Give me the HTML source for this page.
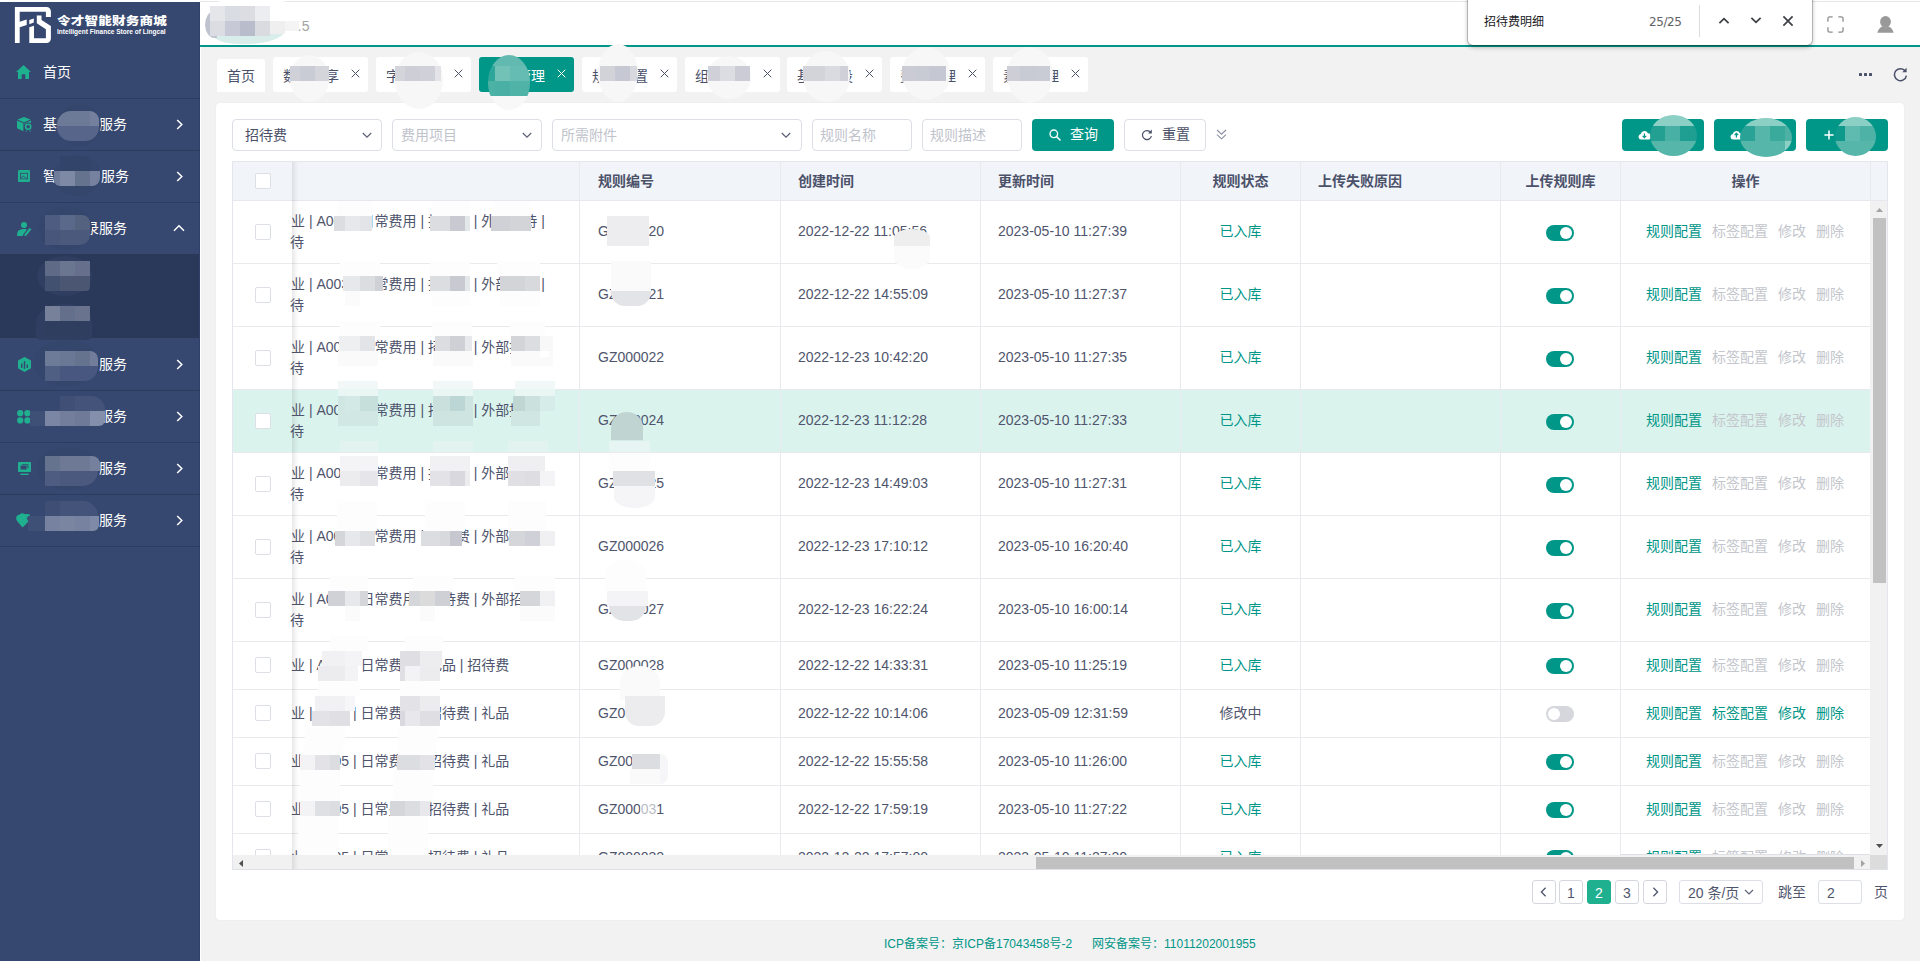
<!DOCTYPE html>
<html lang="zh-CN">
<head>
<meta charset="utf-8">
<title>令才智能财务商城</title>
<style>
*{box-sizing:border-box;margin:0;padding:0}
html,body{width:1920px;height:961px;overflow:hidden}
body{background:#f2f2f2;font-family:"Liberation Sans","Noto Sans CJK SC",sans-serif;font-size:14px;color:#4b5169;position:relative}
.abs{position:absolute}
/* ---------- sidebar ---------- */
#side{position:absolute;left:0;top:2px;width:200px;height:959px;background:#374870;border-right:1px solid #30406a}
#side .sep{position:absolute;left:0;width:200px;height:1px;background:#2d3b5e}
#side .t{position:absolute;color:#fff;font-size:14px;line-height:20px;white-space:nowrap}
#side svg{position:absolute}
#sub{position:absolute;left:0;top:252px;width:199px;height:84px;background:#2a3859}
.mz{position:absolute}
/* ---------- header ---------- */
#topline{position:absolute;left:200px;top:1px;width:1720px;height:1px;background:#e6e6e6}
#top0{position:absolute;left:0;top:0;width:1920px;height:2px;background:#fff}
#head{position:absolute;left:200px;top:2px;width:1720px;height:43px;background:#fff}
#gline{position:absolute;left:200px;top:45px;width:1720px;height:2px;background:#009688}
#vline{position:absolute;left:200px;top:47px;width:1px;height:914px;background:#fff}
/* ---------- tabs ---------- */
.tab{position:absolute;top:57px;height:35px;background:#fff;border-radius:3px;color:#4b5169;font-size:14px;line-height:35px;white-space:nowrap}
.tab.on{background:#009688;color:#fff}
.tab span{position:absolute;top:0}
.tab svg{position:absolute;top:12px}
/* ---------- card ---------- */
#card{position:absolute;left:216px;top:103px;width:1688px;height:817px;background:#fff;border-radius:4px;box-shadow:0 0 2px rgba(0,0,0,.06)}
.inp{position:absolute;top:119px;height:32px;border:1px solid #dcdfe6;border-radius:4px;background:#fff;font-size:14px;line-height:30px;color:#bfc3cc;padding-left:8px;white-space:nowrap}
.inp svg{position:absolute;top:10px}
.btn{position:absolute;top:119px;height:32px;border-radius:4px;background:#009688;color:#fff;font-size:14px;line-height:32px;white-space:nowrap}
/* ---------- table ---------- */
#tbl{position:absolute;left:232px;top:161px;width:1656px;height:709px;background:#fff;overflow:hidden}
#thead{position:absolute;left:0;top:0;width:1656px;height:40px;background:#f1f4f9;border-bottom:1px solid #e6e8ee}
.th{position:absolute;top:1px;height:38px;line-height:38px;font-weight:bold;color:#4b5169;font-size:14px;white-space:nowrap}
.vl{position:absolute;top:0;width:1px;height:694px;background:#e9eaee}
.row{position:absolute;left:0;width:1638px;border-bottom:1px solid #e9eaee}
.row.hl{background:#dbf3ed}
.c{position:absolute;white-space:nowrap;line-height:21px;font-size:14px;color:#4f556d}
.cb{position:absolute;left:22px;width:16px;height:16px;border:1px solid #dcdfe6;border-radius:2px;background:#fff}
.sw{position:absolute;left:1314px;width:28px;height:16px;border-radius:8px;background:#009688}
.sw i{position:absolute;right:2px;top:2px;width:12px;height:12px;border-radius:6px;background:#fff}
.sw.off{background:#d5d7dc}
.sw.off i{right:auto;left:2px}
.g{color:#009688}
.d{color:#c3c6cc}
.ops{position:absolute;left:1414px;white-space:nowrap;line-height:21px;font-size:14px}
.ops span{margin-right:10px}
/* ---------- pagination ---------- */
.pg{position:absolute;top:880px;height:24px;min-width:24px;border:1px solid #d4d7de;border-radius:3px;background:#fff;text-align:center;line-height:24px;font-size:14px;color:#4f556d}
.pg.on{background:#1fb08f;border-color:#1fb08f;color:#fff}
</style>
</head>
<body>
<div id="top0"></div>
<div id="topline"></div>
<div id="head"></div>
<div id="gline"></div>
<div id="vline"></div>
<div id="side">
  <!-- logo -->
  <svg style="left:0;top:0" width="200" height="46" viewBox="0 2 200 46">
    <g fill="#fff">
      <path d="M14.9 6.9H46.5A4.4 4.4 0 0 1 50.9 11.3V17H45.9V11.8H19.7V21.7L26.7 19.6V25L19.7 27.3V43H14.9Z"/>
      <path d="M29.3 20L33.8 18.4V22.6L29.3 24.2Z"/>
      <path d="M36.8 15.6H41.5V20L50.9 25.9V38.6A4.4 4.4 0 0 1 46.5 43H29.3V27.3L34 25.7V38.3H45.9V29.2L36.8 23.3Z"/>
    </g>
  </svg>
  <div class="t" style="left:57px;top:11px;font-size:13.6px;font-weight:900;line-height:16px;letter-spacing:0.15px;transform:scaleY(.86);transform-origin:0 14px">令才智能财务商城</div>
  <div class="t" style="left:57px;top:23px;font-size:12px;font-weight:bold;line-height:14px;transform:scale(.545);transform-origin:0 50%">Intelligent Finance Store of Lingcal</div>

  <!-- 首页 -->
  <svg style="left:16px;top:63px" width="15" height="14" viewBox="0 0 15 14"><path fill="#1fb08f" d="M7.5 0L15 7H13V13.4Q13 14 12.4 14H9.3V9.2H5.7V14H2.6Q2 14 2 13.4V7H0Z"/></svg>
  <div class="t" style="left:43px;top:60px">首页</div>
  <div class="sep" style="top:96px"></div>

  <!-- item 1 -->
  <svg style="left:17px;top:115px" width="15" height="15" viewBox="0 0 15 15"><g fill="#1fb08f"><path d="M7 0L13.6 2.6L7 5.4L0.4 2.6Z"/><path d="M0 3.6L6.4 6.3V14.2L0.6 11.6Q0 11.3 0 10.7Z"/><path d="M7.6 6.3L14 3.6V6.2A4.1 4.1 0 0 0 10.9 5.6A4 4 0 0 0 7.6 10Z"/><path d="M11.2 6.4A3.3 3.3 0 1 0 11.2 13A3.3 3.3 0 0 0 11.2 6.4ZM11.2 8A1.7 1.7 0 1 1 11.2 11.4A1.7 1.7 0 0 1 11.2 8Z"/><path d="M9.3 12.6L8.8 15L10 14.3ZM13.1 12.6L13.6 15L12.4 14.3Z"/></g></svg>
  <div class="t" style="left:43px;top:112px">基</div>
  <div class="t" style="left:99px;top:112px">服务</div>
  <svg style="left:175px;top:117px" width="9" height="11" viewBox="0 0 9 11"><path d="M2.2 1L6.8 5.5L2.2 10" fill="none" stroke="#fff" stroke-width="1.5"/></svg>
  <div class="sep" style="top:148px"></div>

  <!-- item 2 -->
  <svg style="left:18px;top:168px" width="12" height="12" viewBox="0 0 12 12"><rect x="0" y="0" width="12" height="12" rx="1" fill="#1fb08f"/><rect x="2.4" y="3.3" width="7.2" height="5.6" fill="none" stroke="#374870" stroke-width=".8"/><path d="M3.2 8L5 5.8L6.4 6.8L7.6 7.8H8.6" fill="none" stroke="#374870" stroke-width=".8"/><path d="M1 1.4L2 2M11 1.4L10 2M1 10.6L2 10M11 10.6L10 10" stroke="#2a947d" stroke-width=".6"/></svg>
  <div class="t" style="left:43px;top:164px">智</div>
  <div class="t" style="left:101px;top:164px">服务</div>
  <svg style="left:175px;top:169px" width="9" height="11" viewBox="0 0 9 11"><path d="M2.2 1L6.8 5.5L2.2 10" fill="none" stroke="#fff" stroke-width="1.5"/></svg>
  <div class="sep" style="top:200px"></div>

  <!-- item 3 -->
  <svg style="left:17px;top:220px" width="15" height="14" viewBox="0 0 15 14"><g fill="#1fb08f"><circle cx="7" cy="3" r="3"/><path d="M0 13.4Q0 7 6.4 7H8.6L10 7.6L6.2 12.6L5.8 14H.6Q0 14 0 13.4Z"/><path d="M12.6 6L14.4 7.2L9.4 13.6L7.4 14.2L7.8 12.2Z"/></g></svg>
  <div class="t" style="left:85px;top:216px">录服务</div>
  <svg style="left:173px;top:222px" width="12" height="8" viewBox="0 0 12 8"><path d="M1 6.8L6 1.8L11 6.8" fill="none" stroke="#fff" stroke-width="1.5"/></svg>

  <div id="sub"></div>

  <!-- item 4 -->
  <svg style="left:18px;top:355px" width="13" height="15" viewBox="0 0 13 15"><path fill="#1fb08f" d="M6.5 0L13 3.6V11.2L6.5 15L0 11.2V3.6ZM3 6.4V11H4.4V6.4ZM5.8 4V11.8H7.2V4ZM8.6 7.6V11H10V7.6Z"/></svg>
  <div class="t" style="left:99px;top:352px">服务</div>
  <svg style="left:175px;top:357px" width="9" height="11" viewBox="0 0 9 11"><path d="M2.2 1L6.8 5.5L2.2 10" fill="none" stroke="#fff" stroke-width="1.5"/></svg>
  <div class="sep" style="top:388px"></div>

  <!-- item 5 -->
  <svg style="left:17px;top:408px" width="14" height="14" viewBox="0 0 14 14"><g fill="#1fb08f"><circle cx="3.2" cy="3.2" r="3.1"/><circle cx="10.4" cy="3.2" r="3.1"/><circle cx="3.2" cy="10.4" r="3.1"/><circle cx="10.4" cy="10.4" r="3.1"/></g></svg>
  <div class="t" style="left:99px;top:404px">服务</div>
  <svg style="left:175px;top:409px" width="9" height="11" viewBox="0 0 9 11"><path d="M2.2 1L6.8 5.5L2.2 10" fill="none" stroke="#fff" stroke-width="1.5"/></svg>
  <div class="sep" style="top:440px"></div>

  <!-- item 6 -->
  <svg style="left:18px;top:460px" width="13" height="14" viewBox="0 0 13 14"><g fill="#1fb08f"><path d="M0 .8Q0 0 .8 0H12.2Q13 0 13 .8V9.2Q13 10 12.2 10H.8Q0 10 0 9.2ZM2.6 3.6V7.6H8.6V3.6ZM4 2.2V2.9H9.4V6.2H10.4V2.2Z"/><path d="M2.4 11.6H10.6V13H2.4Z"/></g></svg>
  <div class="t" style="left:99px;top:456px">服务</div>
  <svg style="left:175px;top:461px" width="9" height="11" viewBox="0 0 9 11"><path d="M2.2 1L6.8 5.5L2.2 10" fill="none" stroke="#fff" stroke-width="1.5"/></svg>
  <div class="sep" style="top:492px"></div>

  <!-- item 7 -->
  <svg style="left:16px;top:511px" width="15" height="15" viewBox="0 0 15 15"><path fill="#1fb08f" d="M4 1.2Q6 -0.6 8.4 1L13.6 1.2L14 2.4L10.6 5L12.4 8.6L7.4 13.8Q6.4 14.6 5.6 13.6L.8 7.4Q-.8 4 1.6 2.2Z"/></svg>
  <div class="t" style="left:99px;top:508px">服务</div>
  <svg style="left:175px;top:513px" width="9" height="11" viewBox="0 0 9 11"><path d="M2.2 1L6.8 5.5L2.2 10" fill="none" stroke="#fff" stroke-width="1.5"/></svg>
  <div class="sep" style="top:544px"></div>
</div>

<!-- header content -->
<div class="abs" style="left:290px;top:16px;font-size:14px;line-height:20px;color:#a3a3a3">7.5</div>
<div class="mz" style="left:205px;top:0px;width:92px;height:44px;border-radius:22px 30px 36px 22px/20px 8px 30px 20px;background:#fff"></div>
<div class="mz" style="left:209px;top:30px;width:76px;height:14px;border-radius:0 0 40px 30px/0 0 14px 14px;background:#d9eeeb"></div>
<div class="mz" style="left:205px;top:11px;width:12px;height:27px;border-radius:10px 0 0 10px/14px 0 0 14px;background:#bfc2cf"></div>
<div class="mz" style="left:210px;top:6px;width:15px;height:15px;background:#e5e6ea"></div>
<div class="mz" style="left:225px;top:6px;width:15px;height:15px;background:#dadce4"></div>
<div class="mz" style="left:240px;top:6px;width:15px;height:15px;background:#dcdde3"></div>
<div class="mz" style="left:255px;top:6px;width:15px;height:15px;background:#ecedf0"></div>
<div class="mz" style="left:210px;top:21px;width:15px;height:15px;background:#dcdde3"></div>
<div class="mz" style="left:225px;top:21px;width:15px;height:15px;background:#c7c9d6"></div>
<div class="mz" style="left:240px;top:21px;width:15px;height:15px;background:#b9bccb"></div>
<div class="mz" style="left:255px;top:21px;width:15px;height:15px;background:#dadbe1"></div>
<div class="mz" style="left:270px;top:21px;width:15px;height:13px;background:#efefef"></div>
<div class="mz" style="left:285px;top:21px;width:14px;height:10px;background:#f4f4f5"></div>

<!-- fullscreen icon -->
<svg class="abs" style="left:1826.5px;top:16px" width="17" height="17" viewBox="0 0 18 18"><path d="M1 6V3Q1 1 3 1H6M12 1H15Q17 1 17 3V6M17 12V15Q17 17 15 17H12M6 17H3Q1 17 1 15V12" fill="none" stroke="#8c8c8c" stroke-width="1.35"/></svg>
<!-- user icon -->
<svg class="abs" style="left:1877px;top:16px" width="17" height="17" viewBox="0 0 17 17"><g fill="#999"><ellipse cx="8.5" cy="5.8" rx="5.4" ry="5.7"/><path d="M.3 16.8C1 13.2 3.4 11.2 6.2 10L8.5 11.6L10.8 10C13.6 11.2 16 13.2 16.7 16.8Z"/></g></svg>

<div class="tab" style="left:217px;top:59px;width:48px;height:33px;border-radius:3px 3px 0 0"><span style="left:10px;line-height:20px;top:7px">首页</span></div>
<div class="tab" style="left:273px;width:95px"><span style="left:10px;line-height:20px;top:9px">数</span><span style="left:52px;line-height:20px;top:9px">享</span><svg style="left:78px" width="9" height="9" viewBox="0 0 9 9"><path d="M.7 .7L8.3 8.3M8.3 .7L.7 8.3" fill="none" stroke="#4b5169" stroke-width="1"/></svg></div>
<div class="tab" style="left:376px;width:95px"><span style="left:10px;line-height:20px;top:9px">字</span><span style="left:52px;line-height:20px;top:9px">理</span><svg style="left:78px" width="9" height="9" viewBox="0 0 9 9"><path d="M.7 .7L8.3 8.3M8.3 .7L.7 8.3" fill="none" stroke="#4b5169" stroke-width="1"/></svg></div>
<div class="tab on" style="left:479px;width:95px"><span style="left:38px;line-height:20px;top:9px">管理</span><svg style="left:78px" width="9" height="9" viewBox="0 0 9 9"><path d="M.7 .7L8.3 8.3M8.3 .7L.7 8.3" fill="none" stroke="#fff" stroke-width="1"/></svg></div>
<div class="tab" style="left:582px;width:95px"><span style="left:10px;line-height:20px;top:9px">规</span><span style="left:52px;line-height:20px;top:9px">置</span><svg style="left:78px" width="9" height="9" viewBox="0 0 9 9"><path d="M.7 .7L8.3 8.3M8.3 .7L.7 8.3" fill="none" stroke="#4b5169" stroke-width="1"/></svg></div>
<div class="tab" style="left:685px;width:95px"><span style="left:10px;line-height:20px;top:9px">组</span><svg style="left:78px" width="9" height="9" viewBox="0 0 9 9"><path d="M.7 .7L8.3 8.3M8.3 .7L.7 8.3" fill="none" stroke="#4b5169" stroke-width="1"/></svg></div>
<div class="tab" style="left:787px;width:95px"><span style="left:10px;line-height:20px;top:9px">基</span><span style="left:52px;line-height:20px;top:9px">设</span><svg style="left:78px" width="9" height="9" viewBox="0 0 9 9"><path d="M.7 .7L8.3 8.3M8.3 .7L.7 8.3" fill="none" stroke="#4b5169" stroke-width="1"/></svg></div>
<div class="tab" style="left:890px;width:95px"><span style="left:10px;line-height:20px;top:9px">费</span><span style="left:52px;line-height:20px;top:9px">理</span><svg style="left:78px" width="9" height="9" viewBox="0 0 9 9"><path d="M.7 .7L8.3 8.3M8.3 .7L.7 8.3" fill="none" stroke="#4b5169" stroke-width="1"/></svg></div>
<div class="tab" style="left:993px;width:95px"><span style="left:10px;line-height:20px;top:9px">素</span><span style="left:52px;line-height:20px;top:9px">理</span><svg style="left:78px" width="9" height="9" viewBox="0 0 9 9"><path d="M.7 .7L8.3 8.3M8.3 .7L.7 8.3" fill="none" stroke="#4b5169" stroke-width="1"/></svg></div>
<div class="abs" style="left:1859px;top:73px;width:2.6px;height:2.6px;background:#4b5169;box-shadow:5px 0 0 #4b5169,10px 0 0 #4b5169;border-radius:.6px"></div>
<svg class="abs" style="left:1893px;top:67px" width="15" height="15" viewBox="0 0 15 15"><path d="M12.4 4.2A6 6 0 1 0 13.4 8.6" fill="none" stroke="#4b5169" stroke-width="1.5"/><path d="M13.6 .8V5.2H9.2Z" fill="#4b5169"/></svg>
<!--TABSMZ-->
<!--SIDEMZ_START-->
<!-- sidebar mosaics -->
<div class="mz" style="left:57px;top:104px;width:44px;height:42px;background:#35466d;border-radius:50%"></div>
<div class="mz" style="left:57px;top:111px;width:33px;height:15px;background:#6c7a97;border-radius:14px 0 0 0"></div>
<div class="mz" style="left:90px;top:111px;width:9px;height:15px;background:#74809d;border-radius:0 9px 0 0"></div>
<div class="mz" style="left:57px;top:126px;width:42px;height:15px;background:#57658a;border-radius:0 0 14px 14px"></div>
<div class="mz" style="left:53px;top:155px;width:48px;height:41px;background:#35466d;border-radius:50%"></div>
<div class="mz" style="left:60px;top:156px;width:30px;height:15px;background:#33446a"></div>
<div class="mz" style="left:54px;top:171px;width:6px;height:15px;background:#6f7c9a;border-radius:0 0 0 6px"></div>
<div class="mz" style="left:60px;top:171px;width:15px;height:15px;background:#7d89a5"></div>
<div class="mz" style="left:75px;top:171px;width:15px;height:15px;background:#66738f"></div>
<div class="mz" style="left:90px;top:171px;width:10px;height:15px;background:#75819e;border-radius:0 0 8px 0"></div>
<div class="mz" style="left:38px;top:206px;width:54px;height:44px;background:#35466d;border-radius:50%"></div>
<div class="mz" style="left:45px;top:215px;width:15px;height:15px;background:#4d5c80"></div>
<div class="mz" style="left:60px;top:215px;width:15px;height:15px;background:#5a6889"></div>
<div class="mz" style="left:75px;top:215px;width:15px;height:15px;background:#54627f;border-radius:0 8px 0 0"></div>
<div class="mz" style="left:45px;top:230px;width:15px;height:15px;background:#47567a"></div>
<div class="mz" style="left:60px;top:230px;width:30px;height:15px;background:#4b5a7c;border-radius:0 0 10px 0"></div>
<div class="mz" style="left:37px;top:256px;width:55px;height:40px;background:#2f3e61;border-radius:50%"></div>
<div class="mz" style="left:45px;top:261px;width:15px;height:15px;background:#5f6b86"></div>
<div class="mz" style="left:60px;top:261px;width:15px;height:15px;background:#6a7690"></div>
<div class="mz" style="left:75px;top:261px;width:15px;height:15px;background:#666f8c"></div>
<div class="mz" style="left:45px;top:276px;width:15px;height:15px;background:#435171"></div>
<div class="mz" style="left:60px;top:276px;width:30px;height:15px;background:#4a5672;border-radius:0 0 4px 0"></div>
<div class="mz" style="left:36px;top:304px;width:56px;height:36px;background:#2f3e61;border-radius:50% 50% 10% 10%"></div>
<div class="mz" style="left:45px;top:306px;width:15px;height:15px;background:#778199"></div>
<div class="mz" style="left:60px;top:306px;width:15px;height:15px;background:#646f8b"></div>
<div class="mz" style="left:75px;top:306px;width:15px;height:15px;background:#6a738d"></div>
<div class="mz" style="left:45px;top:321px;width:45px;height:15px;background:#2f3d5e"></div>
<div class="mz" style="left:33px;top:340px;width:67px;height:46px;background:#35466d;border-radius:50%"></div>
<div class="mz" style="left:45px;top:351px;width:15px;height:15px;background:#6d7a98"></div>
<div class="mz" style="left:60px;top:351px;width:15px;height:15px;background:#6a7795"></div>
<div class="mz" style="left:75px;top:351px;width:15px;height:15px;background:#66738f"></div>
<div class="mz" style="left:90px;top:351px;width:8px;height:15px;background:#717d9b;border-radius:0 8px 0 0"></div>
<div class="mz" style="left:45px;top:366px;width:15px;height:15px;background:#4f5e83"></div>
<div class="mz" style="left:60px;top:366px;width:38px;height:15px;background:#485780;border-radius:0 0 14px 0"></div>
<div class="mz" style="left:60px;top:396px;width:15px;height:15px;background:#3f4f75"></div>
<div class="mz" style="left:75px;top:396px;width:30px;height:15px;background:#44537a;border-radius:0 14px 0 0"></div>
<div class="mz" style="left:30px;top:411px;width:15px;height:15px;background:#3f5076"></div>
<div class="mz" style="left:45px;top:411px;width:15px;height:15px;background:#7a86a3"></div>
<div class="mz" style="left:60px;top:411px;width:15px;height:15px;background:#727e9b"></div>
<div class="mz" style="left:75px;top:411px;width:15px;height:15px;background:#6e7a97"></div>
<div class="mz" style="left:90px;top:411px;width:15px;height:15px;background:#8490ab;border-radius:0 0 6px 0"></div>
<div class="mz" style="left:37px;top:447px;width:63px;height:43px;background:#35466d;border-radius:50%"></div>
<div class="mz" style="left:45px;top:456px;width:15px;height:15px;background:#66738f"></div>
<div class="mz" style="left:60px;top:456px;width:30px;height:15px;background:#6d7995"></div>
<div class="mz" style="left:90px;top:456px;width:10px;height:15px;background:#74809c;border-radius:0 8px 0 0"></div>
<div class="mz" style="left:45px;top:471px;width:15px;height:15px;background:#4d5c80"></div>
<div class="mz" style="left:60px;top:471px;width:38px;height:15px;background:#4a597d;border-radius:0 0 16px 0"></div>
<div class="mz" style="left:45px;top:501px;width:15px;height:15px;background:#3e4e74"></div>
<div class="mz" style="left:60px;top:501px;width:38px;height:15px;background:#44537a;border-radius:0 16px 0 0"></div>
<div class="mz" style="left:28px;top:516px;width:17px;height:15px;background:#3f5077"></div>
<div class="mz" style="left:45px;top:516px;width:15px;height:15px;background:#76829f"></div>
<div class="mz" style="left:60px;top:516px;width:15px;height:15px;background:#7985a1"></div>
<div class="mz" style="left:75px;top:516px;width:15px;height:15px;background:#7682a0"></div>
<div class="mz" style="left:90px;top:516px;width:9px;height:15px;background:#7f8aa6;border-radius:0 0 6px 0"></div>
<!--SIDEMZ_END-->


<div id="card"></div>
<div class="inp" style="left:232px;width:150px;color:#4b5169;padding-left:12px">招待费<svg style="left:129px;top:12px" width="10" height="7" viewBox="0 0 10 7"><path d="M.8 1L5 5.2L9.2 1" fill="none" stroke="#5d6279" stroke-width="1.25"/></svg></div>
<div class="inp" style="left:392px;width:150px">费用项目<svg style="left:129px;top:12px" width="10" height="7" viewBox="0 0 10 7"><path d="M.8 1L5 5.2L9.2 1" fill="none" stroke="#5d6279" stroke-width="1.25"/></svg></div>
<div class="inp" style="left:552px;width:250px">所需附件<svg style="left:228px;top:12px" width="10" height="7" viewBox="0 0 10 7"><path d="M.8 1L5 5.2L9.2 1" fill="none" stroke="#5d6279" stroke-width="1.25"/></svg></div>
<div class="inp" style="left:812px;width:100px;padding-left:7px">规则名称</div>
<div class="inp" style="left:922px;width:100px;padding-left:7px">规则描述</div>
<div class="btn" style="left:1032px;width:82px"><svg class="abs" style="left:17px;top:10px" width="12" height="12" viewBox="0 0 12 12"><circle cx="4.8" cy="4.8" r="3.8" fill="none" stroke="#fff" stroke-width="1.35"/><path d="M7.6 7.6L11 11" stroke="#fff" stroke-width="1.5" stroke-linecap="round"/></svg><span class="abs" style="left:38px;top:-1px">查询</span></div>
<div class="btn" style="left:1124px;width:82px;background:#fff;border:1px solid #dcdfe6;color:#4b5169;line-height:30px"><svg class="abs" style="left:16px;top:9px" width="12" height="12" viewBox="0 0 12 12"><path d="M9.6 3.4A4.5 4.5 0 1 0 10.4 7" fill="none" stroke="#4b5169" stroke-width="1.2"/><path d="M10.8 .6V4.4H7Z" fill="#4b5169"/></svg><span class="abs" style="left:37px;top:-1px">重置</span></div>
<svg class="abs" style="left:1216px;top:129px" width="11" height="11" viewBox="0 0 11 11"><path d="M1 1L5.5 5.2L10 1M1 5.6L5.5 9.8L10 5.6" fill="none" stroke="#8a8ea0" stroke-width="1.1"/></svg>
<div class="btn" style="left:1622px;width:82px"><svg class="abs" style="left:16px;top:11px" width="13" height="10" viewBox="0 0 13 10"><path fill="#fff" d="M3.2 9.6A2.9 2.9 0 0 1 2.7 3.9A3.8 3.8 0 0 1 9.9 3.2A3.2 3.2 0 0 1 9.4 9.6Z"/><path d="M6.4 3.4V7.4M4.6 5.8L6.4 7.6L8.2 5.8" fill="none" stroke="#009688" stroke-width="1.2"/></svg></div>
<div class="btn" style="left:1714px;width:82px"><svg class="abs" style="left:16px;top:11px" width="13" height="10" viewBox="0 0 13 10"><path fill="#fff" d="M3.2 9.6A2.9 2.9 0 0 1 2.7 3.9A3.8 3.8 0 0 1 9.9 3.2A3.2 3.2 0 0 1 9.4 9.6Z"/><path d="M6.4 7.6V3.6M4.6 5.2L6.4 3.4L8.2 5.2" fill="none" stroke="#009688" stroke-width="1.2"/></svg></div>
<div class="btn" style="left:1806px;width:82px"><svg class="abs" style="left:18px;top:11px" width="10" height="10" viewBox="0 0 10 10"><path d="M5 .4V9.6M.4 5H9.6" stroke="#fff" stroke-width="1.5"/></svg></div>
<div class="mz" style="left:1650px;top:115px;width:47px;height:41px;border-radius:50%;overflow:hidden"><div class="mz" style="left:0px;top:0px;width:47px;height:11px;background:#8ccfc5"></div><div class="mz" style="left:0px;top:11px;width:15px;height:15px;background:#23a092"></div><div class="mz" style="left:15px;top:11px;width:15px;height:15px;background:#48b0a4"></div><div class="mz" style="left:30px;top:11px;width:17px;height:15px;background:#1f9f91"></div><div class="mz" style="left:0px;top:26px;width:47px;height:15px;background:#57b6aa"></div></div>
<div class="mz" style="left:1740px;top:118px;width:52px;height:39px;border-radius:50%;overflow:hidden"><div class="mz" style="left:0px;top:0px;width:52px;height:8px;background:#8ccfc5"></div><div class="mz" style="left:0px;top:8px;width:15px;height:15px;background:#2aa396"></div><div class="mz" style="left:15px;top:8px;width:15px;height:15px;background:#57b6aa"></div><div class="mz" style="left:30px;top:8px;width:15px;height:15px;background:#3aaa9d"></div><div class="mz" style="left:45px;top:8px;width:7px;height:15px;background:#4db1a5"></div><div class="mz" style="left:0px;top:23px;width:45px;height:16px;background:#57b6aa"></div><div class="mz" style="left:45px;top:23px;width:7px;height:16px;background:#8ccfc5"></div></div>
<div class="mz" style="left:1834.5px;top:117px;width:41.5px;height:39px;border-radius:50%;overflow:hidden"><div class="mz" style="left:-0.5px;top:0px;width:42px;height:9px;background:#8ccfc5"></div><div class="mz" style="left:-0.5px;top:9px;width:11px;height:15px;background:#0d998b"></div><div class="mz" style="left:10.5px;top:9px;width:15px;height:15px;background:#5fbab0"></div><div class="mz" style="left:25.5px;top:9px;width:16px;height:15px;background:#4fb2a7"></div><div class="mz" style="left:-0.5px;top:24px;width:42px;height:15px;background:#57b6aa"></div></div>
<!--TABLE_START--><div id="tbl">
<div id="thead"></div>
<div class="th" style="left:366px">规则编号</div>
<div class="th" style="left:566px">创建时间</div>
<div class="th" style="left:766px">更新时间</div>
<div class="th" style="left:949px;width:119px;text-align:center">规则状态</div>
<div class="th" style="left:1086px">上传失败原因</div>
<div class="th" style="left:1269px;width:119px;text-align:center">上传规则库</div>
<div class="th" style="left:1389px;width:249px;text-align:center">操作</div>
<div class="cb" style="left:23px;top:12px"></div>
<div id="tbody" style="position:absolute;left:0;top:40px;width:1638px;height:654px;overflow:hidden">
<div class="row" style="top:0px;height:63px">
<div class="cb" style="left:23px;top:23px"></div><div class="c" style="left:59px;top:10px">业 | A003 | 日常费用 | 招待费 | 外部招待 |<br><span style="position:relative;left:-1px">待</span></div><div class="c" style="left:366px;top:20px">GZ000020</div><div class="c" style="left:566px;top:20px">2022-12-22 11:05:56</div><div class="c" style="left:766px;top:20px">2023-05-10 11:27:39</div><div class="c g" style="left:949px;width:119px;text-align:center;top:20px">已入库</div><div class="sw" style="top:24px"><i></i></div><div class="ops" style="top:20px"><span class="g">规则配置</span><span class="d">标签配置</span><span class="d">修改</span><span class="d">删除</span></div>
</div>
<div class="row" style="top:63px;height:63px">
<div class="cb" style="left:23px;top:23px"></div><div class="c" style="left:59px;top:10px">业 | A003 | 日常费用 | 招待费 | 外部招待 |<br><span style="position:relative;left:-1px">待</span></div><div class="c" style="left:366px;top:20px">GZ000021</div><div class="c" style="left:566px;top:20px">2022-12-22 14:55:09</div><div class="c" style="left:766px;top:20px">2023-05-10 11:27:37</div><div class="c g" style="left:949px;width:119px;text-align:center;top:20px">已入库</div><div class="sw" style="top:24px"><i></i></div><div class="ops" style="top:20px"><span class="g">规则配置</span><span class="d">标签配置</span><span class="d">修改</span><span class="d">删除</span></div>
</div>
<div class="row" style="top:126px;height:63px">
<div class="cb" style="left:23px;top:23px"></div><div class="c" style="left:59px;top:10px">业 | A003 | 日常费用 | 招待费 | 外部招待 |<br><span style="position:relative;left:-1px">待</span></div><div class="c" style="left:366px;top:20px">GZ000022</div><div class="c" style="left:566px;top:20px">2022-12-23 10:42:20</div><div class="c" style="left:766px;top:20px">2023-05-10 11:27:35</div><div class="c g" style="left:949px;width:119px;text-align:center;top:20px">已入库</div><div class="sw" style="top:24px"><i></i></div><div class="ops" style="top:20px"><span class="g">规则配置</span><span class="d">标签配置</span><span class="d">修改</span><span class="d">删除</span></div>
</div>
<div class="row hl" style="top:189px;height:63px">
<div class="cb" style="left:23px;top:23px"></div><div class="c" style="left:59px;top:10px">业 | A003 | 日常费用 | 招待费 | 外部招待 |<br><span style="position:relative;left:-1px">待</span></div><div class="c" style="left:366px;top:20px">GZ000024</div><div class="c" style="left:566px;top:20px">2022-12-23 11:12:28</div><div class="c" style="left:766px;top:20px">2023-05-10 11:27:33</div><div class="c g" style="left:949px;width:119px;text-align:center;top:20px">已入库</div><div class="sw" style="top:24px"><i></i></div><div class="ops" style="top:20px"><span class="g">规则配置</span><span class="d">标签配置</span><span class="d">修改</span><span class="d">删除</span></div>
</div>
<div class="row" style="top:252px;height:63px">
<div class="cb" style="left:23px;top:23px"></div><div class="c" style="left:59px;top:10px">业 | A003 | 日常费用 | 招待费 | 外部招待 |<br><span style="position:relative;left:-1px">待</span></div><div class="c" style="left:366px;top:20px">GZ000025</div><div class="c" style="left:566px;top:20px">2022-12-23 14:49:03</div><div class="c" style="left:766px;top:20px">2023-05-10 11:27:31</div><div class="c g" style="left:949px;width:119px;text-align:center;top:20px">已入库</div><div class="sw" style="top:24px"><i></i></div><div class="ops" style="top:20px"><span class="g">规则配置</span><span class="d">标签配置</span><span class="d">修改</span><span class="d">删除</span></div>
</div>
<div class="row" style="top:315px;height:63px">
<div class="cb" style="left:23px;top:23px"></div><div class="c" style="left:59px;top:10px">业 | A003 | 日常费用 | 招待费 | 外部招待 |<br><span style="position:relative;left:-1px">待</span></div><div class="c" style="left:366px;top:20px">GZ000026</div><div class="c" style="left:566px;top:20px">2022-12-23 17:10:12</div><div class="c" style="left:766px;top:20px">2023-05-10 16:20:40</div><div class="c g" style="left:949px;width:119px;text-align:center;top:20px">已入库</div><div class="sw" style="top:24px"><i></i></div><div class="ops" style="top:20px"><span class="g">规则配置</span><span class="d">标签配置</span><span class="d">修改</span><span class="d">删除</span></div>
</div>
<div class="row" style="top:378px;height:63px">
<div class="cb" style="left:23px;top:23px"></div><div class="c" style="left:59px;top:10px">业 | A003 | 日常费用 | 招待费 | 外部招待 |<br><span style="position:relative;left:-1px">待</span></div><div class="c" style="left:366px;top:20px">GZ000027</div><div class="c" style="left:566px;top:20px">2022-12-23 16:22:24</div><div class="c" style="left:766px;top:20px">2023-05-10 16:00:14</div><div class="c g" style="left:949px;width:119px;text-align:center;top:20px">已入库</div><div class="sw" style="top:24px"><i></i></div><div class="ops" style="top:20px"><span class="g">规则配置</span><span class="d">标签配置</span><span class="d">修改</span><span class="d">删除</span></div>
</div>
<div class="row" style="top:441px;height:48px">
<div class="cb" style="left:23px;top:15px"></div><div class="c" style="left:59px;top:13px">业 | A003 | 日常费用 | 礼品 | 招待费</div><div class="c" style="left:366px;top:13px">GZ000028</div><div class="c" style="left:566px;top:13px">2022-12-22 14:33:31</div><div class="c" style="left:766px;top:13px">2023-05-10 11:25:19</div><div class="c g" style="left:949px;width:119px;text-align:center;top:13px">已入库</div><div class="sw" style="top:16px"><i></i></div><div class="ops" style="top:13px"><span class="g">规则配置</span><span class="d">标签配置</span><span class="d">修改</span><span class="d">删除</span></div>
</div>
<div class="row" style="top:489px;height:48px">
<div class="cb" style="left:23px;top:15px"></div><div class="c" style="left:59px;top:13px">业 | A003 | 日常费用 | 招待费 | 礼品</div><div class="c" style="left:366px;top:13px">GZ000029</div><div class="c" style="left:566px;top:13px">2022-12-22 10:14:06</div><div class="c" style="left:766px;top:13px">2023-05-09 12:31:59</div><div class="c" style="left:949px;width:119px;text-align:center;top:13px">修改中</div><div class="sw off" style="top:16px"><i></i></div><div class="ops" style="top:13px"><span class="g">规则配置</span><span class="g">标签配置</span><span class="g">修改</span><span class="g">删除</span></div>
</div>
<div class="row" style="top:537px;height:48px">
<div class="cb" style="left:23px;top:15px"></div><div class="c" style="left:59px;top:13px">业 | A005 | 日常费用 | 招待费 | 礼品</div><div class="c" style="left:366px;top:13px">GZ000030</div><div class="c" style="left:566px;top:13px">2022-12-22 15:55:58</div><div class="c" style="left:766px;top:13px">2023-05-10 11:26:00</div><div class="c g" style="left:949px;width:119px;text-align:center;top:13px">已入库</div><div class="sw" style="top:16px"><i></i></div><div class="ops" style="top:13px"><span class="g">规则配置</span><span class="d">标签配置</span><span class="d">修改</span><span class="d">删除</span></div>
</div>
<div class="row" style="top:585px;height:48px">
<div class="cb" style="left:23px;top:15px"></div><div class="c" style="left:59px;top:13px">业 | A005 | 日常费用 | 招待费 | 礼品</div><div class="c" style="left:366px;top:13px">GZ000031</div><div class="c" style="left:566px;top:13px">2022-12-22 17:59:19</div><div class="c" style="left:766px;top:13px">2023-05-10 11:27:22</div><div class="c g" style="left:949px;width:119px;text-align:center;top:13px">已入库</div><div class="sw" style="top:16px"><i></i></div><div class="ops" style="top:13px"><span class="g">规则配置</span><span class="d">标签配置</span><span class="d">修改</span><span class="d">删除</span></div>
</div>
<div class="row" style="top:633px;height:48px">
<div class="cb" style="left:23px;top:15px"></div><div class="c" style="left:59px;top:13px">业 | A005 | 日常费用 | 招待费 | 礼品</div><div class="c" style="left:366px;top:13px">GZ000032</div><div class="c" style="left:566px;top:13px">2022-12-22 17:57:00</div><div class="c" style="left:766px;top:13px">2023-05-10 11:27:20</div><div class="c g" style="left:949px;width:119px;text-align:center;top:13px">已入库</div><div class="sw" style="top:16px"><i></i></div><div class="ops" style="top:13px"><span class="g">规则配置</span><span class="d">标签配置</span><span class="d">修改</span><span class="d">删除</span></div>
</div>
</div>
<div class="vl" style="left:347px"></div>
<div class="vl" style="left:548px"></div>
<div class="vl" style="left:748px"></div>
<div class="vl" style="left:948px"></div>
<div class="vl" style="left:1068px"></div>
<div class="vl" style="left:1268px"></div>
<div class="vl" style="left:1388px"></div>
<div class="vl" style="left:1638px;height:40px"></div>
<div class="abs" style="left:60px;top:1px;width:7px;height:707px;z-index:3;background:linear-gradient(90deg,rgba(0,0,0,.09),rgba(0,0,0,.035) 50%,rgba(0,0,0,0))"></div>
<div class="abs" style="left:1388px;top:693px;width:250px;height:1px;background:#dfe1e6"></div>
<div class="abs" style="left:1638px;top:40px;width:17px;height:654px;background:#f1f1f1"></div>
<div class="abs" style="left:1641px;top:57px;width:13px;height:365px;background:#c1c1c1"></div>
<svg class="abs" style="left:1644px;top:47px" width="7" height="4" viewBox="0 0 7 4"><path d="M0 4L3.5 0L7 4Z" fill="#a3a3a3"/></svg>
<svg class="abs" style="left:1644px;top:683px" width="7" height="4" viewBox="0 0 7 4"><path d="M0 0L3.5 4L7 0Z" fill="#505050"/></svg>
<div class="abs" style="left:1px;top:694px;width:1637px;height:15px;background:#f1f1f1"></div>
<div class="abs" style="left:804px;top:696px;width:818px;height:13px;background:#c1c1c1"></div>
<svg class="abs" style="left:7px;top:699px" width="4" height="7" viewBox="0 0 4 7"><path d="M4 0L0 3.5L4 7Z" fill="#505050"/></svg>
<svg class="abs" style="left:1629px;top:699px" width="4" height="7" viewBox="0 0 4 7"><path d="M0 0L4 3.5L0 7Z" fill="#a3a3a3"/></svg>
<div class="abs" style="left:1638px;top:694px;width:17px;height:15px;background:#dcdcdc"></div>
<div class="abs" style="left:0;top:0;width:1656px;height:1px;background:#e3e6ec"></div>
<div class="abs" style="left:0;top:0;width:1px;height:709px;background:#e3e6ec"></div>
<div class="abs" style="left:1655px;top:0;width:1px;height:709px;background:#e3e6ec"></div>
<div class="abs" style="left:0;top:708px;width:1656px;height:1px;background:#dfe1e8"></div>
</div>
<!--TABLE_END-->
<div class="pg" style="left:1532px;width:24px"><svg class="abs" style="left:7px;top:6px" width="7" height="10" viewBox="0 0 7 10"><path d="M5.6 .8L1.4 5L5.6 9.2" fill="none" stroke="#4f556d" stroke-width="1.3"/></svg></div>
<div class="pg" style="left:1559px;width:24px">1</div>
<div class="pg on" style="left:1587px;width:24px">2</div>
<div class="pg" style="left:1615px;width:24px">3</div>
<div class="pg" style="left:1643px;width:24px"><svg class="abs" style="left:8px;top:6px" width="7" height="10" viewBox="0 0 7 10"><path d="M1.4 .8L5.6 5L1.4 9.2" fill="none" stroke="#4f556d" stroke-width="1.3"/></svg></div>
<div class="pg" style="left:1679px;width:84px;text-align:left;padding-left:8px;border-color:#dcdfe6;white-space:nowrap">20 条/页<svg class="abs" style="left:64px;top:8px" width="10" height="7" viewBox="0 0 10 7"><path d="M1 1L5 5L9 1" fill="none" stroke="#5d6279" stroke-width="1.2"/></svg></div>
<div class="abs" style="left:1778px;top:882px;line-height:20px;font-size:14px;color:#4f556d">跳至</div>
<div class="pg" style="left:1818px;width:44px;text-align:left;padding-left:8px;border-color:#dcdfe6">2</div>
<div class="abs" style="left:1874px;top:882px;line-height:20px;font-size:14px;color:#4f556d">页</div>

<div class="abs" style="left:884px;top:936px;font-size:12px;line-height:16px;color:#009688;white-space:nowrap">ICP备案号：京ICP备17043458号-2</div>
<div class="abs" style="left:1092px;top:936px;font-size:12px;line-height:16px;color:#009688;white-space:nowrap">网安备案号：11011202001955</div>

<div class="mz" style="left:290px;top:55px;width:39px;height:47px;background:#f7f7f7;border-radius:50%"></div>
<div class="mz" style="left:290px;top:66px;width:10px;height:15px;background:#d0d1d8"></div>
<div class="mz" style="left:300px;top:66px;width:15px;height:15px;background:#c9cbd5"></div>
<div class="mz" style="left:315px;top:66px;width:14px;height:15px;background:#d4d5db"></div>
<div class="mz" style="left:395px;top:52px;width:48px;height:57px;background:#f7f7f7;border-radius:50%"></div>
<div class="mz" style="left:395px;top:66px;width:10px;height:15px;background:#d4d5db"></div>
<div class="mz" style="left:405px;top:66px;width:15px;height:15px;background:#cdced6"></div>
<div class="mz" style="left:420px;top:66px;width:15px;height:15px;background:#d0d1d8"></div>
<div class="mz" style="left:435px;top:66px;width:6px;height:15px;background:#e4e4e8"></div>
<div class="mz" style="left:487.7px;top:55.4px;width:42.6px;height:54.6px;border-radius:50%;overflow:hidden"><div class="mz" style="left:-0.7px;top:-0.4px;width:44px;height:11px;background:#62b9af"></div><div class="mz" style="left:-0.7px;top:10.6px;width:8px;height:15px;background:#2ea699"></div><div class="mz" style="left:7.3px;top:10.6px;width:15px;height:15px;background:#72c2b8"></div><div class="mz" style="left:22.3px;top:10.6px;width:21px;height:15px;background:#65bcb2"></div><div class="mz" style="left:-0.7px;top:25.6px;width:8px;height:15px;background:#4db2a6"></div><div class="mz" style="left:7.3px;top:25.6px;width:15px;height:15px;background:#4ab0a6"></div><div class="mz" style="left:22.3px;top:25.6px;width:21px;height:15px;background:#4fb3a8"></div><div class="mz" style="left:-0.7px;top:40.6px;width:44px;height:14px;background:#f8f8f8"></div></div>
<div class="mz" style="left:598px;top:44px;width:40px;height:58px;background:#f7f7f7;border-radius:50%"></div>
<div class="mz" style="left:600px;top:66px;width:15px;height:15px;background:#d2d3d9"></div>
<div class="mz" style="left:615px;top:66px;width:15px;height:15px;background:#c6c8d3"></div>
<div class="mz" style="left:630px;top:66px;width:7px;height:15px;background:#d8d9de"></div>
<div class="mz" style="left:707px;top:56px;width:44px;height:43px;background:#f7f7f7;border-radius:50%"></div>
<div class="mz" style="left:708px;top:66px;width:12px;height:15px;background:#d0d1d8"></div>
<div class="mz" style="left:720px;top:66px;width:15px;height:15px;background:#dcdde2"></div>
<div class="mz" style="left:735px;top:66px;width:15px;height:15px;background:#cbccd5"></div>
<div class="mz" style="left:803px;top:51px;width:47px;height:51px;background:#f7f7f7;border-radius:50%"></div>
<div class="mz" style="left:803px;top:66px;width:22px;height:15px;background:#d3d4da"></div>
<div class="mz" style="left:825px;top:66px;width:15px;height:15px;background:#dadbe0"></div>
<div class="mz" style="left:840px;top:66px;width:8px;height:15px;background:#d0d1d8"></div>
<div class="mz" style="left:902px;top:47px;width:48px;height:53px;background:#f7f7f7;border-radius:50%"></div>
<div class="mz" style="left:902px;top:66px;width:13px;height:15px;background:#cacbd4"></div>
<div class="mz" style="left:915px;top:66px;width:15px;height:15px;background:#c8cad4"></div>
<div class="mz" style="left:930px;top:66px;width:16px;height:15px;background:#c5c7d2"></div>
<div class="mz" style="left:1007px;top:47px;width:46px;height:56px;background:#f7f7f7;border-radius:50%"></div>
<div class="mz" style="left:1007px;top:66px;width:13px;height:15px;background:#cdced6"></div>
<div class="mz" style="left:1020px;top:66px;width:15px;height:15px;background:#c8cad4"></div>
<div class="mz" style="left:1035px;top:66px;width:15px;height:15px;background:#c9cbd5"></div>

<!--TBLMZ_START-->
<!-- table mosaics -->
<div class="mz" style="left:337px;top:201px;width:35px;height:15px;background:#fdfdfd"></div>
<div class="mz" style="left:432px;top:201px;width:38px;height:15px;background:#fdfdfd"></div>
<div class="mz" style="left:495px;top:201px;width:36px;height:15px;background:#fdfdfd"></div>
<div class="mz" style="left:334px;top:216px;width:11px;height:15px;background:#dcdde0"></div>
<div class="mz" style="left:345px;top:216px;width:15px;height:15px;background:#e6e8eb"></div>
<div class="mz" style="left:360px;top:216px;width:12px;height:15px;background:#e3e4e7"></div>
<div class="mz" style="left:430px;top:216px;width:20px;height:15px;background:#dcdde0"></div>
<div class="mz" style="left:450px;top:216px;width:15px;height:15px;background:#c9cad1"></div>
<div class="mz" style="left:465px;top:216px;width:5px;height:15px;background:#e3e7ea"></div>
<div class="mz" style="left:491px;top:216px;width:19px;height:15px;background:#d0d1d6"></div>
<div class="mz" style="left:510px;top:216px;width:21px;height:15px;background:#d3d4d8"></div>
<div class="mz" style="left:340px;top:261px;width:40px;height:15px;background:#fdfdfd"></div>
<div class="mz" style="left:430px;top:261px;width:40px;height:15px;background:#fdfdfd"></div>
<div class="mz" style="left:497px;top:261px;width:43px;height:15px;background:#fdfdfd"></div>
<div class="mz" style="left:343px;top:276px;width:17px;height:15px;background:#e6e8eb"></div>
<div class="mz" style="left:360px;top:276px;width:15px;height:15px;background:#dcdde0"></div>
<div class="mz" style="left:375px;top:276px;width:8px;height:15px;background:#d0d1d6"></div>
<div class="mz" style="left:430px;top:276px;width:20px;height:15px;background:#dcdde0"></div>
<div class="mz" style="left:450px;top:276px;width:15px;height:15px;background:#c9cad1"></div>
<div class="mz" style="left:465px;top:276px;width:5px;height:15px;background:#e3e7ea"></div>
<div class="mz" style="left:500px;top:276px;width:25px;height:15px;background:#d3d4d8"></div>
<div class="mz" style="left:525px;top:276px;width:15px;height:15px;background:#d8d9dc"></div>
<div class="mz" style="left:345px;top:291px;width:15px;height:15px;background:#fbfbfb"></div>
<div class="mz" style="left:432px;top:291px;width:38px;height:15px;background:#fdfdfd"></div>
<div class="mz" style="left:500px;top:291px;width:40px;height:15px;background:#fdfdfd"></div>
<div class="mz" style="left:340px;top:321px;width:40px;height:15px;background:#fdfdfd"></div>
<div class="mz" style="left:432px;top:321px;width:40px;height:15px;background:#fdfdfd"></div>
<div class="mz" style="left:510px;top:321px;width:35px;height:15px;background:#fdfdfd"></div>
<div class="mz" style="left:339px;top:336px;width:21px;height:15px;background:#eeeff1"></div>
<div class="mz" style="left:360px;top:336px;width:15px;height:15px;background:#e3e4e7"></div>
<div class="mz" style="left:435px;top:336px;width:15px;height:15px;background:#dcdde0"></div>
<div class="mz" style="left:450px;top:336px;width:15px;height:15px;background:#cfd0d6"></div>
<div class="mz" style="left:465px;top:336px;width:7px;height:15px;background:#e6e8eb"></div>
<div class="mz" style="left:511px;top:336px;width:14px;height:15px;background:#d3d4d8"></div>
<div class="mz" style="left:525px;top:336px;width:15px;height:15px;background:#dcdde0"></div>
<div class="mz" style="left:540px;top:336px;width:13px;height:15px;background:#f8f8f9"></div>
<div class="mz" style="left:338px;top:351px;width:40px;height:15px;background:#fafafb"></div>
<div class="mz" style="left:433px;top:351px;width:40px;height:15px;background:#fafafb"></div>
<div class="mz" style="left:511px;top:351px;width:42px;height:15px;background:#fafafb"></div>
<div class="mz" style="left:338px;top:381px;width:40px;height:8px;background:#f1f8f7"></div>
<div class="mz" style="left:433px;top:381px;width:40px;height:8px;background:#f1f8f7"></div>
<div class="mz" style="left:515px;top:381px;width:40px;height:8px;background:#f1f8f7"></div>
<div class="mz" style="left:338px;top:389px;width:40px;height:7px;background:#e9f6f4"></div>
<div class="mz" style="left:433px;top:389px;width:40px;height:7px;background:#e9f6f4"></div>
<div class="mz" style="left:515px;top:389px;width:40px;height:7px;background:#e9f6f4"></div>
<div class="mz" style="left:338px;top:396px;width:7px;height:15px;background:#cfe6e2"></div>
<div class="mz" style="left:345px;top:396px;width:15px;height:15px;background:#d3e9e5"></div>
<div class="mz" style="left:360px;top:396px;width:18px;height:15px;background:#c6dfdb"></div>
<div class="mz" style="left:433px;top:396px;width:17px;height:15px;background:#c9e0dd"></div>
<div class="mz" style="left:450px;top:396px;width:15px;height:15px;background:#bcd6d6"></div>
<div class="mz" style="left:465px;top:396px;width:8px;height:15px;background:#cde4e1"></div>
<div class="mz" style="left:513px;top:396px;width:12px;height:15px;background:#bfd6d2"></div>
<div class="mz" style="left:525px;top:396px;width:15px;height:15px;background:#cbe1de"></div>
<div class="mz" style="left:540px;top:396px;width:15px;height:15px;background:#d6ece8"></div>
<div class="mz" style="left:338px;top:411px;width:40px;height:15px;background:#d0e7e3"></div>
<div class="mz" style="left:433px;top:411px;width:40px;height:15px;background:#cde4e1"></div>
<div class="mz" style="left:511px;top:411px;width:29px;height:15px;background:#cfe6e2"></div>
<div class="mz" style="left:340px;top:441px;width:38px;height:11px;background:#e3f3f0"></div>
<div class="mz" style="left:433px;top:441px;width:40px;height:11px;background:#e3f3f0"></div>
<div class="mz" style="left:508px;top:441px;width:40px;height:11px;background:#e3f3f0"></div>
<div class="mz" style="left:340px;top:456px;width:38px;height:15px;background:#f4f4f6"></div>
<div class="mz" style="left:430px;top:456px;width:40px;height:15px;background:#f1f1f3"></div>
<div class="mz" style="left:508px;top:456px;width:37px;height:15px;background:#efeff1"></div>
<div class="mz" style="left:340px;top:471px;width:20px;height:15px;background:#ececef"></div>
<div class="mz" style="left:360px;top:471px;width:18px;height:15px;background:#e6e6ea"></div>
<div class="mz" style="left:430px;top:471px;width:20px;height:15px;background:#e3e3e7"></div>
<div class="mz" style="left:450px;top:471px;width:15px;height:15px;background:#d8d8de"></div>
<div class="mz" style="left:465px;top:471px;width:5px;height:15px;background:#ececef"></div>
<div class="mz" style="left:508px;top:471px;width:17px;height:15px;background:#e0e0e4"></div>
<div class="mz" style="left:525px;top:471px;width:15px;height:15px;background:#dddde2"></div>
<div class="mz" style="left:540px;top:471px;width:15px;height:15px;background:#f4f4f6"></div>
<div class="mz" style="left:337px;top:501px;width:40px;height:30px;background:#fdfdfd"></div>
<div class="mz" style="left:425px;top:501px;width:40px;height:30px;background:#fdfdfd"></div>
<div class="mz" style="left:508px;top:501px;width:38px;height:30px;background:#fdfdfd"></div>
<div class="mz" style="left:335px;top:531px;width:10px;height:15px;background:#d5d6da"></div>
<div class="mz" style="left:345px;top:531px;width:15px;height:15px;background:#e6e8eb"></div>
<div class="mz" style="left:360px;top:531px;width:15px;height:15px;background:#dfe0e3"></div>
<div class="mz" style="left:421px;top:531px;width:19px;height:15px;background:#dcdde0"></div>
<div class="mz" style="left:440px;top:531px;width:10px;height:15px;background:#d8d9dc"></div>
<div class="mz" style="left:450px;top:531px;width:12px;height:15px;background:#c6c7cf"></div>
<div class="mz" style="left:509px;top:531px;width:16px;height:15px;background:#d5d6da"></div>
<div class="mz" style="left:525px;top:531px;width:15px;height:15px;background:#d0d1d8"></div>
<div class="mz" style="left:540px;top:531px;width:15px;height:15px;background:#f0f0f2"></div>
<div class="mz" style="left:330px;top:576px;width:38px;height:15px;background:#fdfdfd"></div>
<div class="mz" style="left:413px;top:576px;width:40px;height:15px;background:#fdfdfd"></div>
<div class="mz" style="left:515px;top:576px;width:40px;height:15px;background:#fdfdfd"></div>
<div class="mz" style="left:328px;top:591px;width:17px;height:15px;background:#d0d1d6"></div>
<div class="mz" style="left:345px;top:591px;width:15px;height:15px;background:#e6e8eb"></div>
<div class="mz" style="left:360px;top:591px;width:8px;height:15px;background:#d5d6da"></div>
<div class="mz" style="left:409px;top:591px;width:11px;height:15px;background:#d5d6da"></div>
<div class="mz" style="left:420px;top:591px;width:15px;height:15px;background:#dcdbdb"></div>
<div class="mz" style="left:435px;top:591px;width:15px;height:15px;background:#cfd0d6"></div>
<div class="mz" style="left:520px;top:591px;width:20px;height:15px;background:#d5d6da"></div>
<div class="mz" style="left:540px;top:591px;width:15px;height:15px;background:#f1f1f3"></div>
<div class="mz" style="left:345px;top:606px;width:15px;height:15px;background:#fbfbfc"></div>
<div class="mz" style="left:420px;top:606px;width:15px;height:15px;background:#fbfbfc"></div>
<div class="mz" style="left:520px;top:606px;width:35px;height:15px;background:#fbfbfc"></div>
<div class="mz" style="left:330px;top:636px;width:38px;height:15px;background:#fdfdfd"></div>
<div class="mz" style="left:405px;top:636px;width:38px;height:15px;background:#fdfdfd"></div>
<div class="mz" style="left:322px;top:651px;width:23px;height:15px;background:#f1f1f3"></div>
<div class="mz" style="left:345px;top:651px;width:17px;height:15px;background:#f4f4f6"></div>
<div class="mz" style="left:400px;top:651px;width:20px;height:15px;background:#dedee3"></div>
<div class="mz" style="left:420px;top:651px;width:22px;height:15px;background:#ededf0"></div>
<div class="mz" style="left:318px;top:666px;width:27px;height:15px;background:#ececef"></div>
<div class="mz" style="left:345px;top:666px;width:13px;height:15px;background:#f3f3f5"></div>
<div class="mz" style="left:400px;top:666px;width:5px;height:15px;background:#e0e0e4"></div>
<div class="mz" style="left:405px;top:666px;width:15px;height:15px;background:#f3f3f5"></div>
<div class="mz" style="left:420px;top:666px;width:20px;height:15px;background:#ececef"></div>
<div class="mz" style="left:318px;top:681px;width:42px;height:15px;background:#fdfdfd"></div>
<div class="mz" style="left:400px;top:681px;width:40px;height:15px;background:#fdfdfd"></div>
<div class="mz" style="left:315px;top:696px;width:30px;height:15px;background:#f1f1f3"></div>
<div class="mz" style="left:345px;top:696px;width:10px;height:15px;background:#f6f6f8"></div>
<div class="mz" style="left:400px;top:696px;width:20px;height:15px;background:#e3e3e7"></div>
<div class="mz" style="left:420px;top:696px;width:20px;height:15px;background:#ececef"></div>
<div class="mz" style="left:312px;top:711px;width:18px;height:15px;background:#e3e3e7"></div>
<div class="mz" style="left:330px;top:711px;width:20px;height:15px;background:#e0e0e4"></div>
<div class="mz" style="left:400px;top:711px;width:5px;height:15px;background:#d8d8de"></div>
<div class="mz" style="left:405px;top:711px;width:15px;height:15px;background:#e8e8ec"></div>
<div class="mz" style="left:420px;top:711px;width:20px;height:15px;background:#dedee3"></div>
<div class="mz" style="left:305px;top:726px;width:40px;height:15px;background:#fdfdfd"></div>
<div class="mz" style="left:398px;top:726px;width:40px;height:15px;background:#fdfdfd"></div>
<div class="mz" style="left:303px;top:741px;width:40px;height:14px;background:#fdfdfd"></div>
<div class="mz" style="left:398px;top:741px;width:38px;height:14px;background:#fdfdfd"></div>
<div class="mz" style="left:300px;top:755px;width:15px;height:15px;background:#f3f3f5"></div>
<div class="mz" style="left:315px;top:755px;width:15px;height:15px;background:#e3e3e7"></div>
<div class="mz" style="left:330px;top:755px;width:10px;height:15px;background:#dcdde0"></div>
<div class="mz" style="left:397px;top:755px;width:23px;height:15px;background:#dcdde0"></div>
<div class="mz" style="left:420px;top:755px;width:15px;height:15px;background:#e3e3e7"></div>
<div class="mz" style="left:300px;top:770px;width:40px;height:31px;background:#fdfdfd"></div>
<div class="mz" style="left:393px;top:770px;width:40px;height:31px;background:#fdfdfd"></div>
<div class="mz" style="left:300px;top:801px;width:15px;height:15px;background:#f3f3f5"></div>
<div class="mz" style="left:315px;top:801px;width:15px;height:15px;background:#dfe0e4"></div>
<div class="mz" style="left:330px;top:801px;width:10px;height:15px;background:#dcdde0"></div>
<div class="mz" style="left:390px;top:801px;width:15px;height:15px;background:#d5d6da"></div>
<div class="mz" style="left:405px;top:801px;width:15px;height:15px;background:#dcdde0"></div>
<div class="mz" style="left:420px;top:801px;width:10px;height:15px;background:#e8e8ec"></div>
<div class="mz" style="left:298px;top:816px;width:40px;height:39px;background:#fdfdfd"></div>
<div class="mz" style="left:388px;top:816px;width:40px;height:39px;background:#fdfdfd"></div>
<div class="mz" style="left:607px;top:216px;width:42px;height:30px;background:#ededef"></div>
<div class="mz" style="left:611px;top:261px;width:40px;height:30px;background:#fafafa"></div>
<div class="mz" style="left:611px;top:291px;width:40px;height:15px;background:#e3e4e7;border-radius:0 0 14px 14px"></div>
<div class="mz" style="left:611px;top:412px;width:32px;height:30px;background:#c0d5d2;border-radius:50% 50% 0 0"></div>
<div class="mz" style="left:611px;top:440px;width:32px;height:12px;background:#d5ece8"></div>
<div class="mz" style="left:609px;top:441px;width:41px;height:11px;background:#e6f5f2"></div>
<div class="mz" style="left:609px;top:453px;width:41px;height:18px;background:#fdfdfd"></div>
<div class="mz" style="left:613px;top:471px;width:42px;height:15px;background:#e0e1e4"></div>
<div class="mz" style="left:614px;top:486px;width:41px;height:22px;background:#f5f5f7;border-radius:0 0 50% 50%"></div>
<div class="mz" style="left:605px;top:560px;width:41px;height:31px;background:#fdfdfd;border-radius:50% 50% 0 0"></div>
<div class="mz" style="left:607px;top:591px;width:41px;height:15px;background:#f4f4f6"></div>
<div class="mz" style="left:609px;top:606px;width:37px;height:15px;background:#e2e3e6;border-radius:0 0 16px 16px"></div>
<div class="mz" style="left:620px;top:666px;width:40px;height:34px;background:#fafafa;border-radius:50% 50% 0 0"></div>
<div class="mz" style="left:625px;top:696px;width:40px;height:30px;background:#ececef;border-radius:0 0 14px 14px"></div>
<div class="mz" style="left:632px;top:754px;width:28px;height:15px;background:#dcdde0"></div>
<div class="mz" style="left:660px;top:754px;width:8px;height:30px;background:#f6f6f8;border-radius:0 14px 14px 0"></div>
<div class="mz" style="left:630px;top:769px;width:30px;height:15px;background:#fafafa"></div>
<div class="mz" style="left:640px;top:800px;width:16px;height:16px;background:rgba(255,255,255,.6)"></div>
<div class="mz" style="left:894px;top:229px;width:36px;height:17px;background:#eeeeef;border-radius:50% 50% 0 0"></div>
<div class="mz" style="left:894px;top:246px;width:36px;height:23px;background:#fbfbfb;border-radius:0 0 50% 50%"></div>
<div class="mz" style="left:540px;top:351px;width:9px;height:6px;background:#fff"></div>
<div class="mz" style="left:540px;top:411px;width:9px;height:10px;background:#dbf3ed"></div>
<!--TBLMZ_END-->
<!-- browser find bar -->
<div class="abs" style="left:1468px;top:-6px;width:344px;height:51px;background:#fff;border-radius:0 0 5px 5px;box-shadow:0 0 0 1px rgba(0,0,0,.2),0 2px 5px rgba(0,0,0,.3)"></div>
<div class="abs" style="left:1484px;top:13px;font-size:12px;line-height:18px;color:#202124;white-space:nowrap">招待费明细</div>
<div class="abs" style="left:1649px;top:13px;font-size:12px;line-height:18px;color:#5f6368;font-family:'DejaVu Sans','Liberation Sans',sans-serif;letter-spacing:-.4px;white-space:nowrap">25/25</div>
<div class="abs" style="left:1699px;top:5px;width:1px;height:32px;background:#dadce0"></div>
<svg class="abs" style="left:1718px;top:16px" width="12" height="9" viewBox="0 0 12 9"><path d="M1.4 7.2L6 2.6L10.6 7.2" fill="none" stroke="#3c4043" stroke-width="1.7"/></svg>
<svg class="abs" style="left:1750px;top:16px" width="12" height="9" viewBox="0 0 12 9"><path d="M1.4 1.8L6 6.4L10.6 1.8" fill="none" stroke="#3c4043" stroke-width="1.7"/></svg>
<svg class="abs" style="left:1782px;top:15px" width="12" height="12" viewBox="0 0 12 12"><path d="M1.4 1.4L10.6 10.6M10.6 1.4L1.4 10.6" fill="none" stroke="#3c4043" stroke-width="1.7"/></svg>

</body>
</html>
